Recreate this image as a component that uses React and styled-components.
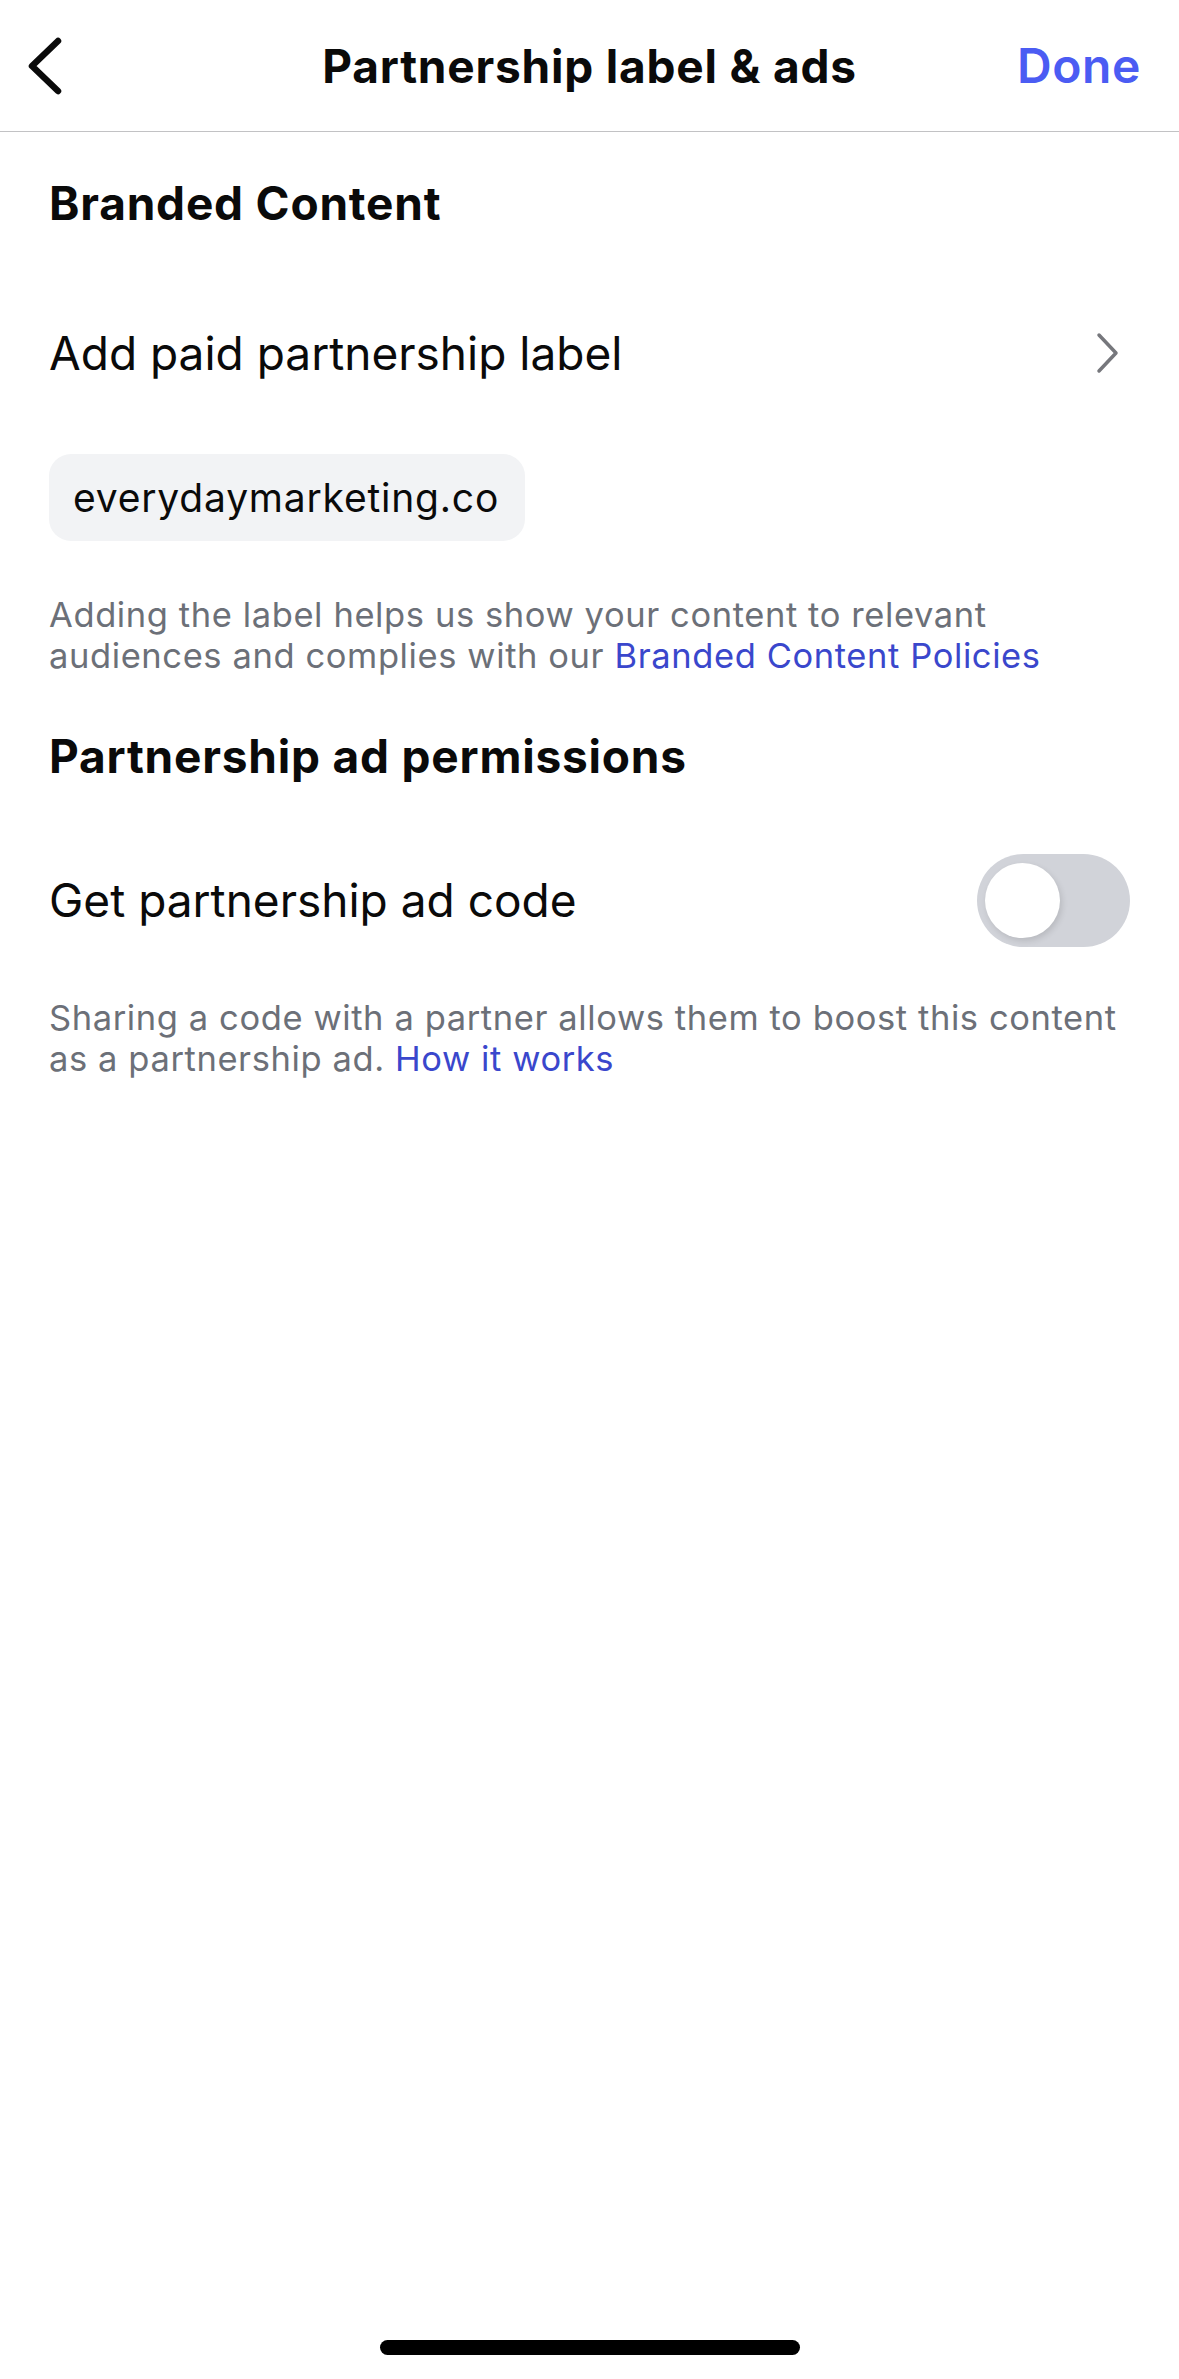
import React from "react";
import styled, { createGlobalStyle } from "styled-components";

const GlobalStyle = createGlobalStyle`
	html, body {
		margin: 0;
		padding: 0;
		background: #ffffff;
	}
	body {
		font-family: Inter, "Noto Sans", "Liberation Sans", sans-serif;
		color: #0a0a0a;
		-webkit-font-smoothing: antialiased;
	}
`;

const Screen = styled.div`
	width: 1179px;
	height: 2379px;
	display: flex;
	flex-direction: column;
	background: #ffffff;
`;

const Header = styled.header`
	height: 132px;
	flex-shrink: 0;
	display: grid;
	grid-template-columns: 200px 1fr 200px;
	align-items: center;
	border-bottom: 1.5px solid #c2c2c4;
	box-sizing: border-box;
	padding: 0 38px;
`;

const BackButton = styled.button`
	justify-self: start;
	display: flex;
	align-items: center;
	margin-left: -12px;
	border: 0;
	background: none;
	padding: 0;
	cursor: pointer;
`;

const Title = styled.h1`
	margin: 0;
	text-align: center;
	font-size: 46px;
	font-weight: 700;
	letter-spacing: 0.8px;
	color: #0a0a0a;
`;

const DoneButton = styled.button`
	justify-self: end;
	border: 0;
	background: none;
	padding: 0;
	font-family: inherit;
	font-size: 48px;
	font-weight: 600;
	letter-spacing: 0.6px;
	color: #4b5cf3;
	cursor: pointer;
`;

const Content = styled.main`
	flex: 1;
	display: flex;
	flex-direction: column;
	align-items: flex-start;
	padding: 0 49px;
`;

const SectionTitle = styled.h2`
	margin: ${(p) => p.$top}px 0 0;
	height: 56px;
	line-height: 56px;
	font-size: 46px;
	font-weight: 700;
	letter-spacing: 0.8px;
	color: #0a0a0a;
`;

const Row = styled.div`
	margin-top: ${(p) => p.$top}px;
	align-self: stretch;
	height: 100px;
	display: flex;
	align-items: center;
	justify-content: space-between;
`;

const RowLabel = styled.span`
	font-size: 46px;
	font-weight: 400;
	color: #0a0a0a;
`;

const Chevron = styled.span`
	display: flex;
	margin-right: 10px;
`;

const Chip = styled.div`
	margin-top: 51px;
	height: 87px;
	display: flex;
	align-items: center;
	padding: 0 26px 0 24px;
	border-radius: 22px;
	background: #f2f3f5;
	font-size: 39px;
	letter-spacing: 0.8px;
	color: #0a0a0a;
`;

const Caption = styled.p`
	margin: ${(p) => p.$top}px 0 0;
	font-size: 34.5px;
	line-height: 41px;
	letter-spacing: 0.6px;
	color: #6c7078;
	white-space: nowrap;
`;

const Link = styled.a`
	color: #3a47cc;
	text-decoration: none;
`;

const Toggle = styled.div`
	width: 153px;
	height: 93px;
	border-radius: 47px;
	background: #d1d3d9;
	display: flex;
	align-items: center;
	padding-left: 8px;
	box-sizing: border-box;
`;

const Knob = styled.div`
	width: 75px;
	height: 75px;
	border-radius: 50%;
	background: #ffffff;
	box-shadow: 2px 3px 6px rgba(0, 0, 0, 0.12);
`;

const HomeBar = styled.div`
	align-self: center;
	width: 420px;
	height: 15px;
	border-radius: 8px;
	background: #000000;
	margin-bottom: 24px;
`;

const App = () => {
	return (
		<Screen>
			<GlobalStyle />
			<Header>
				<BackButton aria-label="Back">
					<svg width="40" height="60" viewBox="0 0 40 60">
						<path
							d="M32 5 L6 30 L32 55"
							fill="none"
							stroke="#0a0a0a"
							strokeWidth="6.5"
							strokeLinecap="round"
							strokeLinejoin="round"
						/>
					</svg>
				</BackButton>
				<Title>Partnership label &amp; ads</Title>
				<DoneButton>Done</DoneButton>
			</Header>

			<Content>
				<SectionTitle $top={43}>Branded Content</SectionTitle>
				<Row $top={72}>
					<RowLabel>Add paid partnership label</RowLabel>
					<Chevron>
						<svg width="24" height="42" viewBox="0 0 24 42">
							<path
								d="M3 3 L20 21 L3 39"
								fill="none"
								stroke="#76777c"
								strokeWidth="3.5"
								strokeLinecap="round"
								strokeLinejoin="round"
							/>
						</svg>
					</Chevron>
				</Row>
				<Chip>everydaymarketing.co</Chip>
				<Caption $top={53}>
					Adding the label helps us show your content to relevant
					<br />
					audiences and complies with our{" "}
					<Link href="#">Branded Content Policies</Link>
				</Caption>

				<SectionTitle $top={52}>Partnership ad permissions</SectionTitle>
				<Row $top={66}>
					<RowLabel>Get partnership ad code</RowLabel>
					<Toggle role="switch" aria-checked="false">
						<Knob />
					</Toggle>
				</Row>
				<Caption $top={47}>
					Sharing a code with a partner allows them to boost this content
					<br />
					as a partnership ad. <Link href="#">How it works</Link>
				</Caption>
			</Content>

			<HomeBar />
		</Screen>
	);
};

export default App;
